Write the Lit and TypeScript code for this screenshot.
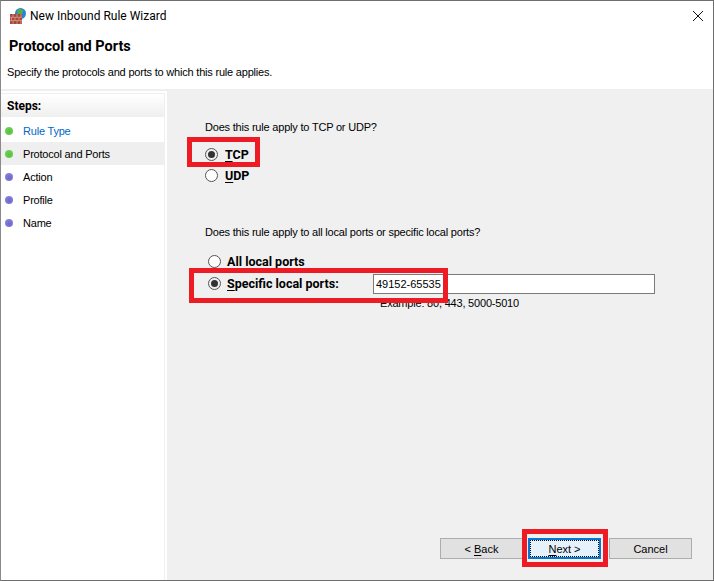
import { LitElement, html, css, svg } from "lit";
import { customElement } from "lit/decorators.js";

const steps = [
  { label: "Rule Type", done: true, link: true },
  { label: "Protocol and Ports", done: true, active: true },
  { label: "Action" },
  { label: "Profile" },
  { label: "Name" },
];

@customElement("app-root")
export class AppRoot extends LitElement {
  static styles = css`
    :host { display: block; width: 714px; height: 581px; font-family: "Liberation Sans", Roboto, sans-serif; font-size: 11px; letter-spacing: -0.2px; color: #000; }
    * { box-sizing: border-box; }
    .win { position: relative; width: 714px; height: 581px; border: 1px solid #6e6e6e; border-left-color: #8a8a8a; background: #fff; display: flex; flex-direction: column; overflow: hidden; }
    .title { height: 29px; flex: none; display: flex; align-items: center; padding-left: 9px; gap: 5px; }
    .title .t { font-family: Roboto, sans-serif; font-size: 12px; line-height: 16px; letter-spacing: 0; margin-left: -1px; }
    .close { margin-left: auto; width: 30px; height: 29px; display: flex; align-items: center; justify-content: center; }
    .head { height: 61px; flex: none; border-bottom: 2px solid #efefef; padding-left: 8px; }
    .head h1 { margin: 8px 0 0; font-family: Roboto, sans-serif; font-size: 14.5px; line-height: 18px; font-weight: 700; letter-spacing: 0; }
    .head p { margin: 8px 0 0 -2px; line-height: 16px; }
    .body { flex: 1; display: flex; min-height: 0; }
    .side { width: 164px; flex: none; margin-top: 2px; border-right: 1px solid #efefef; border-top: 1px solid #efefef; }
    .steps-h { height: 23px; padding: 2px 0 0 6px; line-height: 20px; font-family: Roboto, sans-serif; font-size: 12px; font-weight: 700; letter-spacing: 0; background: linear-gradient(#fff, #efefef); }
    .step { height: 23px; display: flex; align-items: center; padding-left: 4px; gap: 10px; }
    .step.first { margin-top: 2px; }
    .step.active { background: #efefef; }
    .step.link { color: #0066cc; }
    .dot { width: 8px; height: 8px; border-radius: 50%; flex: none; background: radial-gradient(circle at 55% 60%, #6a66cc, #8783d8 70%, #a9a6e4); }
    .dot.done { background: radial-gradient(circle at 55% 60%, #54c23c, #6fcf58 70%, #9adf8a); }
    .panel { flex: 1; margin-left: 2px; background: #f0f0f0; padding: 28px 0 0 38px; display: flex; flex-direction: column; }
    .q { line-height: 16px; }
    .radio { display: flex; align-items: center; gap: 7px; font-family: Roboto, sans-serif; font-weight: 700; font-size: 12.5px; letter-spacing: 0; height: 20px; }
    .ports .radio { gap: 6px; }
    .rb { width: 13px; height: 13px; border-radius: 50%; border: 1px solid #555; background: #fff; flex: none; display: flex; align-items: center; justify-content: center; }
    .rb.on { background: #f0f0f0; }
    .rb.on::after { content: ""; width: 7px; height: 7px; border-radius: 50%; background: #333; }
    u { text-decoration-thickness: 1px; text-underline-offset: 2px; }
    .tcp { margin-top: 9px; }
    .udp { margin-top: 1px; }
    .q2 { margin-top: 39px; }
    .ports { margin: 11px 0 0 3px; }
    .spec { margin-top: 2px; }
    .spec label { width: 140px; flex: none; }
    .input { width: 282px; height: 20px; margin-top: 2px; border: 1px solid #7a7a7a; background: #fff; line-height: 18px; padding-left: 2px; font-family: "Liberation Sans", sans-serif; font-weight: 400; font-size: 11px; letter-spacing: 0; }
    .ex { margin: 2px 0 0 172px; line-height: 16px; }
    .btns { position: absolute; right: 21px; bottom: 21px; display: flex; gap: 5px; letter-spacing: 0; }
    .btn { width: 83px; height: 21px; background: #e1e1e1; border: 1px solid #adadad; display: flex; align-items: center; justify-content: center; }
    .btn.next { width: 73px; margin: 0 3px 0 0; background: #e5f1fb; border: 2px solid #0078d7; position: relative; }
    .btn.next::after { content: ""; position: absolute; inset: 0; border: 1px dotted #000; }
    .mark { position: absolute; border: 5px solid #ed1c24; pointer-events: none; }
    .m1 { left: 186px; top: 136px; width: 73px; height: 30px; }
    .m2 { left: 188px; top: 267px; width: 259px; height: 35px; }
    .m3 { left: 521px; top: 528px; width: 86px; height: 38px; }
  `;

  icon() {
    return html`<svg width="16" height="16" viewBox="0 0 16 16">
      <circle cx="10.500" cy="5.500" r="5.500" fill="#2f7fd6"/>
      <path d="M7 2.500c2.500-2.500 5-1.500 6.500 0l-1.500 4-4 1z" fill="#4fb04a"/>
      <rect x="0" y="6" width="12" height="10" fill="#a8473a"/>
      ${svg`<path d="M0 9.300h12M0 12.600h12M3 6v3.300M7 6v3.300M11 6v3.300M1.500 9.300v3.300M5 9.300v3.300M9 9.300v3.300M3 12.600v3.400M7 12.600v3.400M11 12.600v3.400" stroke="#dba99c" stroke-width=".7" fill="none"/>`}
    </svg>`;
  }

  render() {
    return html`<div class="win">
      <div class="title">
        ${this.icon()}
        <span class="t">New Inbound Rule Wizard</span>
        <div class="close"><svg width="10" height="10" viewBox="0 0 10 10"><path d="M0 0l10 10M10 0L0 10" stroke="#111" stroke-width="1" fill="none"/></svg></div>
      </div>
      <div class="head">
        <h1>Protocol and Ports</h1>
        <p>Specify the protocols and ports to which this rule applies.</p>
      </div>
      <div class="body">
        <div class="side">
          <div class="steps-h">Steps:</div>
          ${steps.map((s, i) => html`<div class="step ${s.active ? "active" : ""} ${s.link ? "link" : ""} ${i === 0 ? "first" : ""}">
            <span class="dot ${s.done ? "done" : ""}"></span><span>${s.label}</span></div>`)}
        </div>
        <div class="panel">
          <div class="q">Does this rule apply to TCP or UDP?</div>
          <div class="radio tcp"><span class="rb on"></span><span><u>T</u>CP</span></div>
          <div class="radio udp"><span class="rb"></span><span><u>U</u>DP</span></div>
          <div class="q q2">Does this rule apply to all local ports or specific local ports?</div>
          <div class="ports">
            <div class="radio"><span class="rb"></span><span><u>A</u>ll local ports</span></div>
            <div class="radio spec"><span class="rb on"></span><label><u>S</u>pecific local ports:</label><div class="input">49152-65535</div></div>
            <div class="ex">Example: 80, 443, 5000-5010</div>
          </div>
        </div>
      </div>
      <div class="btns">
        <div class="btn">&lt;&nbsp;<u>B</u>ack</div>
        <div class="btn next"><span><u>N</u>ext &gt;</span></div>
        <div class="btn">Cancel</div>
      </div>
      <div class="mark m1"></div>
      <div class="mark m2"></div>
      <div class="mark m3"></div>
    </div>`;
  }
}
